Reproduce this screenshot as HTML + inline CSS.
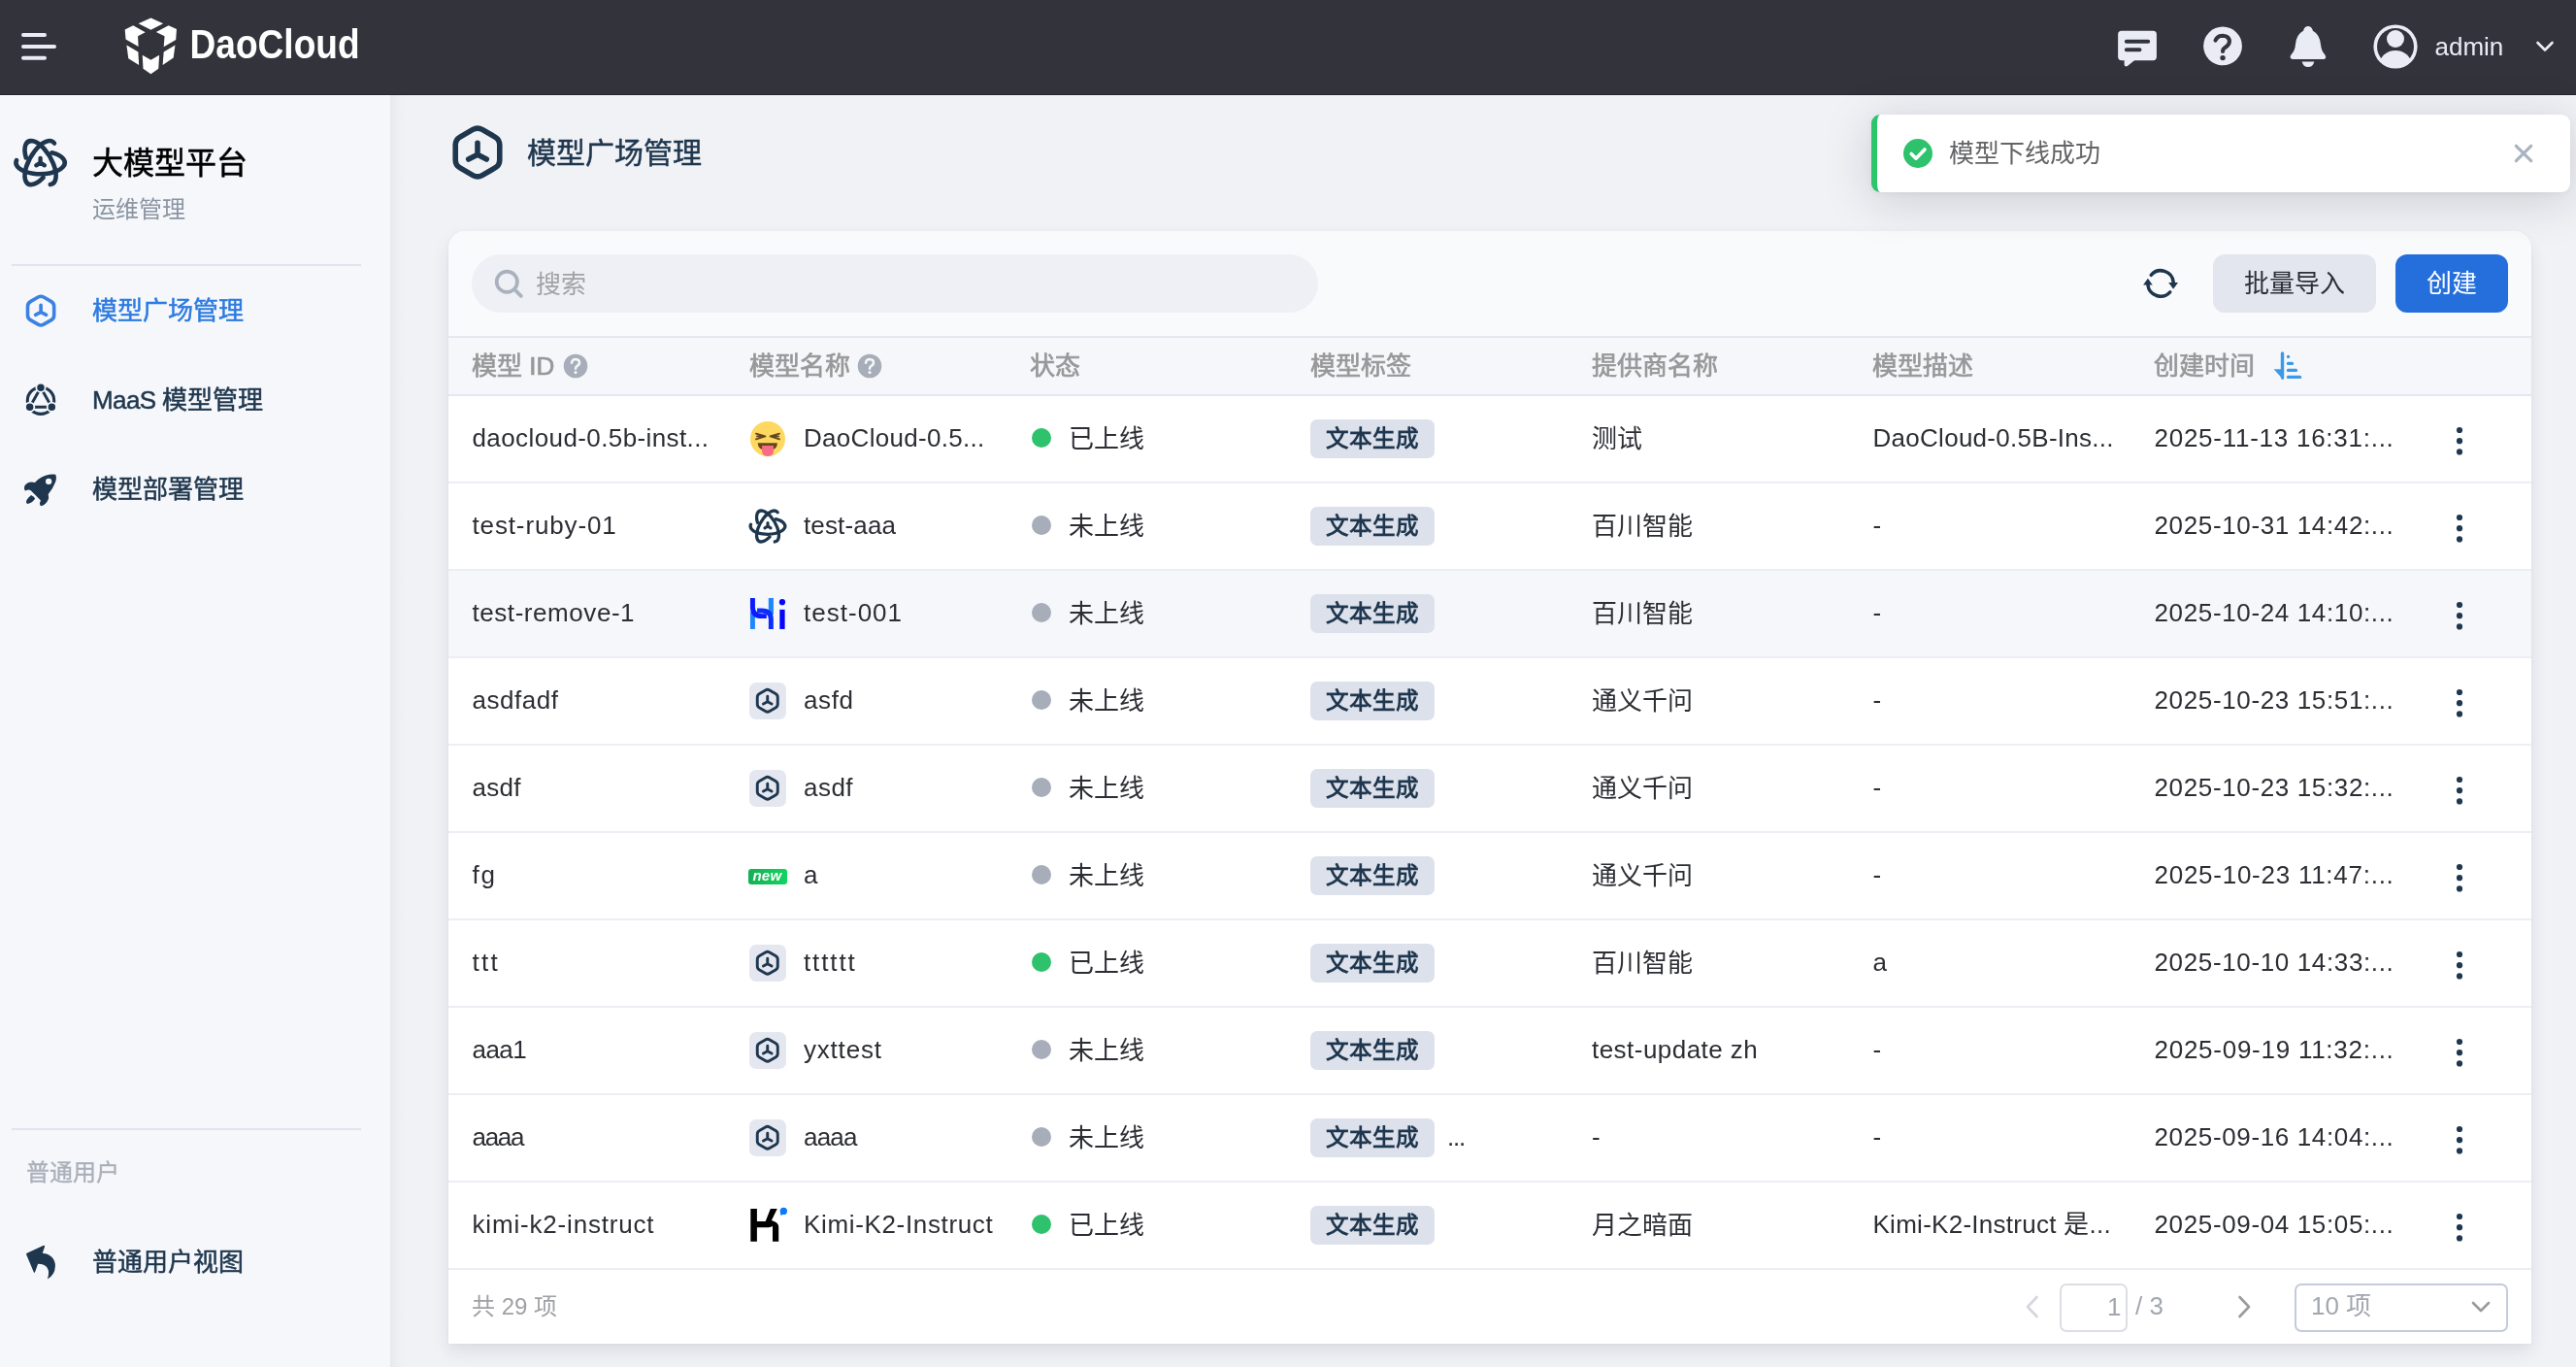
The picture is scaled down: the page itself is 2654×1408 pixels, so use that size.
<!DOCTYPE html>
<html lang="zh-CN"><head><meta charset="utf-8"><title>模型广场管理</title>
<style>
html,body{margin:0;padding:0}
body{width:2654px;height:1408px;overflow:hidden;background:#f1f2f6;font-family:"Liberation Sans",sans-serif;position:relative;color:#2c2e33}
.abs{position:absolute}
.md{-webkit-text-stroke:0.5px currentColor}
.t{position:absolute;white-space:nowrap;line-height:1}
#hdr{position:absolute;left:0;top:0;width:2654px;height:97px;background:#33343b;border-bottom:1px solid #25262b}
#side{position:absolute;left:0;top:98px;width:402px;height:1310px;background:#f6f7fb;border-top:1px solid #fdfdfe}
#sideshadow{position:absolute;left:402px;top:98px;width:16px;height:1310px;background:linear-gradient(90deg,#e8e9ed 0,#eeeff3 50%,#f1f2f6 100%)}
#panel{position:absolute;left:462px;top:238px;width:2146px;height:1146px;background:#fff;border-radius:18px 18px 0 0;box-shadow:0 8px 18px rgba(30,40,70,.10),0 1px 5px rgba(30,40,70,.04);overflow:hidden}
#tb{position:absolute;left:0;top:0;width:2146px;height:108px;background:#f9fafc}
#th{position:absolute;left:0;top:108px;width:2146px;height:58px;background:#f6f7fa;border-top:2px solid #e4e7f0;border-bottom:2px solid #e4e7f0}
.row{position:absolute;left:0;width:2146px;height:88px;border-bottom:2px solid #eceef4;background:#fff}
.hc{position:absolute;top:16px;font-size:26px;-webkit-text-stroke:0.7px currentColor;color:#989899;white-space:nowrap;line-height:1}
.c{position:absolute;top:30px;font-size:26px;color:#2c2e33;white-space:nowrap;line-height:1}
.tag{position:absolute;left:888px;top:24px;width:128px;height:40px;border-radius:7px;background:#dde1ec;color:#1f374e;font-weight:bold;font-size:23.6px;line-height:40px;text-align:center}
.dot{position:absolute;left:601px;top:32.8px;width:20px;height:20px;border-radius:50%}
.ib{position:absolute;left:310px;top:25px;width:38px;height:38px;border-radius:7px;background:#e4e7f0}
</style></head><body><div id="app" style="position:absolute;left:0;top:0;width:2654px;height:1408px;will-change:transform">

<div id="hdr">
<svg class="abs" style="left:18px;top:30px" width="44" height="36" viewBox="0 0 44 36"><g stroke="#e9ecf5" stroke-width="4" stroke-linecap="round"><path d="M6 6H28M6 17.9H38M6 29.8H28"/></g></svg>
<svg style="position:absolute;left:110px;top:10px" width="280" height="80" viewBox="0 0 2576 736"><g fill="#fff"><path d="M300 130L418 78L535 130L418 190Z"/><path d="M172 188L250 150L365 215L295 250L300 350L180 280Z"/><path d="M585 150L662 185L655 285L540 352L548 250L468 212Z"/><path d="M188 335L298 400L305 525L205 462Z"/><path d="M648 335L540 400L530 525L632 455Z"/><path d="M338 430L418 475L498 430L490 560L418 610L345 560Z"/></g></svg>
<svg class="abs" style="left:190px;top:20px" width="190" height="56" viewBox="0 0 190 56"><text x="5.6" y="39.6" font-family="Liberation Sans, sans-serif" font-weight="bold" font-size="43.4" fill="#fff" textLength="175" lengthAdjust="spacingAndGlyphs">DaoCloud</text></svg>
<svg style="position:absolute;left:2170px;top:20px" width="250" height="60" viewBox="0 0 2576 618"><g fill="#e9ecf5"><rect x="125" y="122" width="410" height="313" rx="38"/><path d="M192 420V478Q196 508 226 494L305 430Z"/><circle cx="1237" cy="283" r="205"/><path d="M2143 72Q2105 72 2092 120Q2015 160 2008 270Q2005 330 1962 375Q1940 410 1975 422H2312Q2345 410 2322 375Q2282 330 2278 270Q2270 160 2194 120Q2180 72 2143 72Z"/><path d="M2078 448H2208Q2195 505 2143 505Q2092 505 2078 448Z"/></g><g stroke="#33343b" stroke-width="42" stroke-linecap="round" fill="none"><path d="M215 235H445M215 322H355"/><path d="M1160 222Q1180 172 1237 172Q1308 176 1308 235Q1306 270 1262 298Q1237 315 1237 340"/></g><circle cx="1237" cy="408" r="28" fill="#33343b"/></svg>
<svg class="abs" style="left:2444px;top:24px" width="48" height="48" viewBox="-24 -24 48 48"><defs><clipPath id="avc"><circle r="22"/></clipPath></defs><circle r="22.6" fill="#e9ecf5"/><circle r="19.0" fill="#33343b"/><g clip-path="url(#avc)" fill="#e9ecf5"><circle cx="0" cy="-8" r="9"/><ellipse cx="0" cy="18.5" rx="16.5" ry="14.5"/></g></svg>
<div class="t" id="adm" style="left:2508.5px;top:34.6px;font-size:26px;color:#e9ecf5">admin</div>
<svg class="abs" style="left:2608px;top:36px" width="28" height="24" viewBox="0 0 28 24"><path d="M6.5 8L14 15.5L21.5 8" fill="none" stroke="#e9ecf5" stroke-width="2.6" stroke-linecap="round" stroke-linejoin="round"/></svg>
</div>
<div id="side"></div><div id="sideshadow"></div>
<svg class="abs" style="left:12.4px;top:137.9px" width="59.1" height="59.1" viewBox="-29.6 -29.6 59.1 59.1"><g fill="none" stroke="#1f374e" stroke-width="4.60" stroke-linecap="round"><path transform="rotate(0)" d="M11.79 -10.26 A25.12 11.62 0 1 1 -24.57 -2.42"/><path transform="rotate(120)" d="M11.79 -10.26 A25.12 11.62 0 1 1 -24.57 -2.42"/><path transform="rotate(240)" d="M11.79 -10.26 A25.12 11.62 0 1 1 -24.57 -2.42"/><path stroke-width="4.37" d="M0 0V-4.76 M0 0L-4.30 2.72 M0 0L4.30 2.72"/></g></svg>
<div class="t md" style="left:94.5px;top:151.5px;font-size:32px;color:#000">大模型平台</div>
<div class="t" style="left:95px;top:204px;font-size:24px;color:#8a95a2">运维管理</div>
<div class="abs" style="left:12px;top:272px;width:360px;height:2px;background:#e1e4ee"></div>
<svg style="position:absolute;left:22.9px;top:300.9px" width="38.2" height="38.2" viewBox="-19.08 -19.08 38.15 38.15"><path d="M-2.84 -14.04 Q0.00 -15.68 2.84 -14.04 L10.74 -9.48 Q13.58 -7.84 13.58 -4.56 L13.58 4.56 Q13.58 7.84 10.74 9.48 L2.84 14.04 Q0.00 15.68 -2.84 14.04 L-10.74 9.48 Q-13.58 7.84 -13.58 4.56 L-13.58 -4.56 Q-13.58 -7.84 -10.74 -9.48 Z" fill="none" stroke="#3a82e4" stroke-width="3.60" stroke-linejoin="round"/><path d="M0.00 1.37 L0.00 -5.84 M0.00 1.37 L-5.54 4.17 M0.00 1.37 L5.54 4.17" fill="none" stroke="#3a82e4" stroke-width="3.60" stroke-linecap="round"/></svg>
<div class="t md" style="left:95px;top:307px;font-size:26px;color:#2d7be0">模型广场管理</div>
<svg style="position:absolute;left:15px;top:375px" width="60" height="155" viewBox="0 0 529 1367"><g fill="none" stroke="#1f374e" stroke-width="27"><circle cx="238" cy="332" r="121"/><path d="M238 213L138 390H338Z" stroke-width="26"/></g><g fill="#1f374e" stroke="#f6f7fb" stroke-width="16"><circle cx="238" cy="213" r="41"/><circle cx="138" cy="390" r="41"/><circle cx="338" cy="390" r="41"/></g><path fill="#1f374e" d="M372 1003Q290 995 218 1045Q198 1060 185 1075Q120 1060 92 1105Q82 1140 98 1152Q130 1135 150 1150L238 1240Q220 1270 238 1290Q285 1280 308 1225Q312 1200 305 1185Q350 1130 372 1070Q385 1030 372 1003Z"/><circle cx="310" cy="1066" r="28" fill="#f6f7fb"/><path fill="#1f374e" d="M150 1190Q175 1200 187 1222Q160 1262 118 1270Q100 1262 108 1240Q125 1210 150 1190Z"/></svg>
<div class="t md" style="left:95px;top:399px;font-size:26px;color:#1f374e"><span style="letter-spacing:-0.6px">MaaS </span>模型管理</div>
<div class="t md" style="left:95px;top:491px;font-size:26px;color:#1f374e">模型部署管理</div>
<div class="abs" style="left:12px;top:1162px;width:360px;height:2px;background:#e1e4ee"></div>
<div class="t" style="left:27px;top:1196px;font-size:24px;color:#aab0b9;-webkit-text-stroke:0.35px currentColor">普通用户</div>
<svg style="position:absolute;left:15px;top:1270px" width="60" height="60" viewBox="0 0 1367 1367"><path fill="#1f374e" d="M700 295Q715 300 705 330L655 470Q800 480 880 570Q960 660 955 780Q945 990 770 1080Q830 930 770 820Q700 725 550 725L480 915Q465 940 450 915L275 500Q270 480 290 470L670 295Q690 288 700 295Z"/></svg>
<div class="t md" style="left:95px;top:1286.5px;font-size:26px;color:#1f374e">普通用户视图</div>
<svg style="position:absolute;left:460.0px;top:125.4px" width="64.0" height="64.0" viewBox="-32.00 -32.00 64.00 64.00"><path d="M-4.76 -23.55 Q0.00 -26.30 4.76 -23.55 L18.01 -15.90 Q22.78 -13.15 22.78 -7.65 L22.78 7.65 Q22.78 13.15 18.01 15.90 L4.76 23.55 Q0.00 26.30 -4.76 23.55 L-18.01 15.90 Q-22.78 13.15 -22.78 7.65 L-22.78 -7.65 Q-22.78 -13.15 -18.01 -15.90 Z" fill="none" stroke="#1f374e" stroke-width="5.60" stroke-linejoin="round"/><path d="M0.00 2.30 L0.00 -9.80 M0.00 2.30 L-9.30 7.00 M0.00 2.30 L9.30 7.00" fill="none" stroke="#1f374e" stroke-width="5.60" stroke-linecap="round"/></svg>
<div class="t md" style="left:542.5px;top:143px;font-size:30px;color:#1f374e">模型广场管理</div>
<div id="panel">
<div id="tb">
<div class="abs" style="left:24px;top:24px;width:872px;height:60px;border-radius:30px;background:#eff0f5"></div>
<svg class="abs" style="left:43.6px;top:36.2px" width="36" height="36" viewBox="0 0 36 36"><circle cx="16.3" cy="16.3" r="10.6" fill="none" stroke="#a8b1bd" stroke-width="3.7"/><path d="M24.4 24.4L30.8 30.8" stroke="#a9b4c0" stroke-width="3.8" stroke-linecap="round"/></svg>
<div class="t" style="left:90px;top:42px;font-size:26px;color:#a2a3a6">搜索</div>
<svg style="position:absolute;left:1734px;top:24px" width="60" height="60" viewBox="0 0 1367 1367"><g fill="none" stroke="#1f374e" stroke-width="80" stroke-linecap="round"><path d="M460 485A300 300 0 0 1 985 655"/><path d="M905 885A300 300 0 0 1 385 715"/></g><g fill="#1f374e"><path d="M870 660H1095L982 815Z"/><path d="M275 715H495L385 565Z"/></g></svg>
<div class="abs" style="left:1818px;top:24px;width:168px;height:60px;border-radius:12px;background:#e3e6ee;color:#2b2f37;font-size:26px;line-height:60px;text-align:center">批量导入</div>
<div class="abs" style="left:2006px;top:24px;width:116px;height:60px;border-radius:12px;background:#256fdc;color:#fff;font-size:26px;line-height:60px;text-align:center">创建</div>
</div>
<div id="th">
<div class="hc" style="left:24px">模型 ID</div><svg class="abs" style="left:118px;top:15.7px" width="26" height="26" viewBox="-13 -13 26 26"><circle r="12.3" fill="#a7adb9"/><path d="M-4 -3.2Q-3.6 -7 0 -7Q4 -6.8 4 -3.4Q4 -1.2 1.4 0.2Q0 1 0 2.8" fill="none" stroke="#f5f6f9" stroke-width="2.5" stroke-linecap="round"/><circle cx="0" cy="6.6" r="1.6" fill="#f5f6f9"/></svg>
<div class="hc" style="left:310px">模型名称</div><svg class="abs" style="left:421px;top:15.7px" width="26" height="26" viewBox="-13 -13 26 26"><circle r="12.3" fill="#a7adb9"/><path d="M-4 -3.2Q-3.6 -7 0 -7Q4 -6.8 4 -3.4Q4 -1.2 1.4 0.2Q0 1 0 2.8" fill="none" stroke="#f5f6f9" stroke-width="2.5" stroke-linecap="round"/><circle cx="0" cy="6.6" r="1.6" fill="#f5f6f9"/></svg>
<div class="hc" style="left:598.8px">状态</div>
<div class="hc" style="left:888px">模型标签</div>
<div class="hc" style="left:1178px">提供商名称</div>
<div class="hc" style="left:1467px">模型描述</div>
<div class="hc" style="left:1757px">创建时间</div>
<svg class="abs" style="left:1878px;top:13px" width="34" height="34" viewBox="0 0 34 34"><g fill="none" stroke="#3b9ae8" stroke-width="3.4" stroke-linecap="round"><path d="M11.5 3V28"/><path d="M17.5 6.4H17.6M17.5 13.4H21.5M17.5 20.4H25.5M17.5 27.4H29.6"/></g><path d="M2.6 19.2H12.6V30.2Z" fill="#3b9ae8"/></svg>
</div>
<div class="row" style="top:170px">
<div class="c" id="i0" style="left:24.5px;letter-spacing:0.400px">daocloud-0.5b-inst...</div>
<svg class="abs" style="left:310px;top:25px" width="38" height="38" viewBox="-19 -19 38 38"><circle r="18" fill="#ffd862"/><path d="M-10.4 4.2H10Q9.6 12.3 0 12.3Q-9.8 12.3 -10.4 4.2Z" fill="#65471b"/><path d="M-5.9 7H5.9V12.5Q5.9 17.9 0 17.9Q-5.9 17.9 -5.9 12.5Z" fill="#f76b84"/><path d="M-12 -5.4L-2.6 -2.6L-12 0.4M12 -5.4L2.6 -2.6L12 0.4M-11 -2.6H-4M11 -2.6H4" fill="none" stroke="#65471b" stroke-width="1.9" stroke-linecap="round" stroke-linejoin="round"/></svg>
<div class="c" id="n0" style="left:366px;letter-spacing:0.293px">DaoCloud-0.5...</div>
<div class="dot" style="background:#2dc26b"></div>
<div class="c" id="s0" style="left:639px;top:30.5px">已上线</div>
<div class="tag">文本生成</div>
<div class="c" id="p0" style="left:1178px;top:30.5px">测试</div>
<div class="c" id="d0" style="left:1467.5px;letter-spacing:0.279px">DaoCloud-0.5B-Ins...</div>
<div class="c" id="t0" style="left:1757.5px;letter-spacing:0.742px">2025-11-13 16:31:...</div>
<svg class="abs" style="left:2064px;top:28px" width="16" height="36" viewBox="0 0 16 36"><g fill="#1f374e"><circle cx="8" cy="7" r="3.1"/><circle cx="8" cy="18.2" r="3.1"/><circle cx="8" cy="29.4" r="3.1"/></g></svg>
</div>
<div class="row" style="top:260px">
<div class="c" id="i1" style="left:24.5px;letter-spacing:0.864px">test-ruby-01</div>
<svg class="abs" style="left:308.0px;top:23.0px" width="42.0" height="42.0" viewBox="-21.0 -21.0 42.0 42.0"><g fill="none" stroke="#1f374e" stroke-width="3.30" stroke-linecap="round"><path transform="rotate(0)" d="M8.38 -7.29 A17.85 8.26 0 1 1 -17.46 -1.72"/><path transform="rotate(120)" d="M8.38 -7.29 A17.85 8.26 0 1 1 -17.46 -1.72"/><path transform="rotate(240)" d="M8.38 -7.29 A17.85 8.26 0 1 1 -17.46 -1.72"/><path stroke-width="3.13" d="M0 0V-3.38 M0 0L-3.06 1.93 M0 0L3.06 1.93"/></g></svg>
<div class="c" id="n1" style="left:366px;letter-spacing:0.143px">test-aaa</div>
<div class="dot" style="background:#a7adb9"></div>
<div class="c" id="s1" style="left:639px;top:30.5px">未上线</div>
<div class="tag">文本生成</div>
<div class="c" id="p1" style="left:1178px;top:30.5px">百川智能</div>
<div class="c" id="d1" style="left:1467.5px">-</div>
<div class="c" id="t1" style="left:1757.5px;letter-spacing:0.637px">2025-10-31 14:42:...</div>
<svg class="abs" style="left:2064px;top:28px" width="16" height="36" viewBox="0 0 16 36"><g fill="#1f374e"><circle cx="8" cy="7" r="3.1"/><circle cx="8" cy="18.2" r="3.1"/><circle cx="8" cy="29.4" r="3.1"/></g></svg>
</div>
<div class="row" style="top:350px;background:#f6f7fa">
<div class="c" id="i2" style="left:24.5px;letter-spacing:0.558px">test-remove-1</div>
<svg style="position:absolute;left:304px;top:19px" width="50" height="50" viewBox="0 0 1367 1367"><rect x="190" y="640" width="135" height="480" fill="#1e86ff"/><rect x="705" y="245" width="140" height="460" fill="#1e86ff"/><g fill="none" stroke-width="136"><path d="M385 602H520Q775 602 775 850V1120" stroke="#0b2dff"/><path d="M258 245V505Q258 755 520 755H650" stroke="#0a1cff"/></g><rect x="1020" y="570" width="145" height="550" fill="#0505ff"/><circle cx="1092" cy="360" r="85" fill="#0505ff"/></svg>
<div class="c" id="n2" style="left:366px;letter-spacing:1.014px">test-001</div>
<div class="dot" style="background:#a7adb9"></div>
<div class="c" id="s2" style="left:639px;top:30.5px">未上线</div>
<div class="tag">文本生成</div>
<div class="c" id="p2" style="left:1178px;top:30.5px">百川智能</div>
<div class="c" id="d2" style="left:1467.5px">-</div>
<div class="c" id="t2" style="left:1757.5px;letter-spacing:0.637px">2025-10-24 14:10:...</div>
<svg class="abs" style="left:2064px;top:28px" width="16" height="36" viewBox="0 0 16 36"><g fill="#1f374e"><circle cx="8" cy="7" r="3.1"/><circle cx="8" cy="18.2" r="3.1"/><circle cx="8" cy="29.4" r="3.1"/></g></svg>
</div>
<div class="row" style="top:440px">
<div class="c" id="i3" style="left:24.5px;letter-spacing:0.533px">asdfadf</div>
<div class="ib"></div><svg style="position:absolute;left:314.2px;top:29.2px" width="29.5" height="29.5" viewBox="-14.77 -14.77 29.54 29.54"><path d="M-2.20 -10.87 Q0.00 -12.14 2.20 -10.87 L8.31 -7.34 Q10.51 -6.07 10.51 -3.53 L10.51 3.53 Q10.51 6.07 8.31 7.34 L2.20 10.87 Q0.00 12.14 -2.20 10.87 L-8.31 7.34 Q-10.51 6.07 -10.51 3.53 L-10.51 -3.53 Q-10.51 -6.07 -8.31 -7.34 Z" fill="none" stroke="#1f374e" stroke-width="2.90" stroke-linejoin="round"/><path d="M0.00 1.06 L0.00 -4.52 M0.00 1.06 L-4.29 3.23 M0.00 1.06 L4.29 3.23" fill="none" stroke="#1f374e" stroke-width="2.90" stroke-linecap="round"/></svg>
<div class="c" id="n3" style="left:366px;letter-spacing:0.633px">asfd</div>
<div class="dot" style="background:#a7adb9"></div>
<div class="c" id="s3" style="left:639px;top:30.5px">未上线</div>
<div class="tag">文本生成</div>
<div class="c" id="p3" style="left:1178px;top:30.5px">通义千问</div>
<div class="c" id="d3" style="left:1467.5px">-</div>
<div class="c" id="t3" style="left:1757.5px;letter-spacing:0.637px">2025-10-23 15:51:...</div>
<svg class="abs" style="left:2064px;top:28px" width="16" height="36" viewBox="0 0 16 36"><g fill="#1f374e"><circle cx="8" cy="7" r="3.1"/><circle cx="8" cy="18.2" r="3.1"/><circle cx="8" cy="29.4" r="3.1"/></g></svg>
</div>
<div class="row" style="top:530px">
<div class="c" id="i4" style="left:24.5px;letter-spacing:0.267px">asdf</div>
<div class="ib"></div><svg style="position:absolute;left:314.2px;top:29.2px" width="29.5" height="29.5" viewBox="-14.77 -14.77 29.54 29.54"><path d="M-2.20 -10.87 Q0.00 -12.14 2.20 -10.87 L8.31 -7.34 Q10.51 -6.07 10.51 -3.53 L10.51 3.53 Q10.51 6.07 8.31 7.34 L2.20 10.87 Q0.00 12.14 -2.20 10.87 L-8.31 7.34 Q-10.51 6.07 -10.51 3.53 L-10.51 -3.53 Q-10.51 -6.07 -8.31 -7.34 Z" fill="none" stroke="#1f374e" stroke-width="2.90" stroke-linejoin="round"/><path d="M0.00 1.06 L0.00 -4.52 M0.00 1.06 L-4.29 3.23 M0.00 1.06 L4.29 3.23" fill="none" stroke="#1f374e" stroke-width="2.90" stroke-linecap="round"/></svg>
<div class="c" id="n4" style="left:366px;letter-spacing:0.467px">asdf</div>
<div class="dot" style="background:#a7adb9"></div>
<div class="c" id="s4" style="left:639px;top:30.5px">未上线</div>
<div class="tag">文本生成</div>
<div class="c" id="p4" style="left:1178px;top:30.5px">通义千问</div>
<div class="c" id="d4" style="left:1467.5px">-</div>
<div class="c" id="t4" style="left:1757.5px;letter-spacing:0.637px">2025-10-23 15:32:...</div>
<svg class="abs" style="left:2064px;top:28px" width="16" height="36" viewBox="0 0 16 36"><g fill="#1f374e"><circle cx="8" cy="7" r="3.1"/><circle cx="8" cy="18.2" r="3.1"/><circle cx="8" cy="29.4" r="3.1"/></g></svg>
</div>
<div class="row" style="top:620px">
<div class="c" id="i5" style="left:24.5px;letter-spacing:1.900px">fg</div>
<div class="abs" style="left:309px;top:37px;width:40px;height:15.5px;border-radius:3px;background:linear-gradient(90deg,#14b055,#12d460)"></div><div class="t" style="left:313.4px;top:36.3px;font-size:15px;font-weight:bold;font-style:italic;color:#fff;letter-spacing:0.3px">new</div>
<div class="c" id="n5" style="left:366px">a</div>
<div class="dot" style="background:#a7adb9"></div>
<div class="c" id="s5" style="left:639px;top:30.5px">未上线</div>
<div class="tag">文本生成</div>
<div class="c" id="p5" style="left:1178px;top:30.5px">通义千问</div>
<div class="c" id="d5" style="left:1467.5px">-</div>
<div class="c" id="t5" style="left:1757.5px;letter-spacing:0.742px">2025-10-23 11:47:...</div>
<svg class="abs" style="left:2064px;top:28px" width="16" height="36" viewBox="0 0 16 36"><g fill="#1f374e"><circle cx="8" cy="7" r="3.1"/><circle cx="8" cy="18.2" r="3.1"/><circle cx="8" cy="29.4" r="3.1"/></g></svg>
</div>
<div class="row" style="top:710px">
<div class="c" id="i6" style="left:24.5px;letter-spacing:2.250px">ttt</div>
<div class="ib"></div><svg style="position:absolute;left:314.2px;top:29.2px" width="29.5" height="29.5" viewBox="-14.77 -14.77 29.54 29.54"><path d="M-2.20 -10.87 Q0.00 -12.14 2.20 -10.87 L8.31 -7.34 Q10.51 -6.07 10.51 -3.53 L10.51 3.53 Q10.51 6.07 8.31 7.34 L2.20 10.87 Q0.00 12.14 -2.20 10.87 L-8.31 7.34 Q-10.51 6.07 -10.51 3.53 L-10.51 -3.53 Q-10.51 -6.07 -8.31 -7.34 Z" fill="none" stroke="#1f374e" stroke-width="2.90" stroke-linejoin="round"/><path d="M0.00 1.06 L0.00 -4.52 M0.00 1.06 L-4.29 3.23 M0.00 1.06 L4.29 3.23" fill="none" stroke="#1f374e" stroke-width="2.90" stroke-linecap="round"/></svg>
<div class="c" id="n6" style="left:366px;letter-spacing:1.900px">tttttt</div>
<div class="dot" style="background:#2dc26b"></div>
<div class="c" id="s6" style="left:639px;top:30.5px">已上线</div>
<div class="tag">文本生成</div>
<div class="c" id="p6" style="left:1178px;top:30.5px">百川智能</div>
<div class="c" id="d6" style="left:1467.5px">a</div>
<div class="c" id="t6" style="left:1757.5px;letter-spacing:0.637px">2025-10-10 14:33:...</div>
<svg class="abs" style="left:2064px;top:28px" width="16" height="36" viewBox="0 0 16 36"><g fill="#1f374e"><circle cx="8" cy="7" r="3.1"/><circle cx="8" cy="18.2" r="3.1"/><circle cx="8" cy="29.4" r="3.1"/></g></svg>
</div>
<div class="row" style="top:800px">
<div class="c" id="i7" style="left:24.5px;letter-spacing:-0.567px">aaa1</div>
<div class="ib"></div><svg style="position:absolute;left:314.2px;top:29.2px" width="29.5" height="29.5" viewBox="-14.77 -14.77 29.54 29.54"><path d="M-2.20 -10.87 Q0.00 -12.14 2.20 -10.87 L8.31 -7.34 Q10.51 -6.07 10.51 -3.53 L10.51 3.53 Q10.51 6.07 8.31 7.34 L2.20 10.87 Q0.00 12.14 -2.20 10.87 L-8.31 7.34 Q-10.51 6.07 -10.51 3.53 L-10.51 -3.53 Q-10.51 -6.07 -8.31 -7.34 Z" fill="none" stroke="#1f374e" stroke-width="2.90" stroke-linejoin="round"/><path d="M0.00 1.06 L0.00 -4.52 M0.00 1.06 L-4.29 3.23 M0.00 1.06 L4.29 3.23" fill="none" stroke="#1f374e" stroke-width="2.90" stroke-linecap="round"/></svg>
<div class="c" id="n7" style="left:366px;letter-spacing:0.800px">yxttest</div>
<div class="dot" style="background:#a7adb9"></div>
<div class="c" id="s7" style="left:639px;top:30.5px">未上线</div>
<div class="tag">文本生成</div>
<div class="c" id="p7" style="left:1178px;letter-spacing:0.462px">test-update zh</div>
<div class="c" id="d7" style="left:1467.5px">-</div>
<div class="c" id="t7" style="left:1757.5px;letter-spacing:0.742px">2025-09-19 11:32:...</div>
<svg class="abs" style="left:2064px;top:28px" width="16" height="36" viewBox="0 0 16 36"><g fill="#1f374e"><circle cx="8" cy="7" r="3.1"/><circle cx="8" cy="18.2" r="3.1"/><circle cx="8" cy="29.4" r="3.1"/></g></svg>
</div>
<div class="row" style="top:890px">
<div class="c" id="i8" style="left:24.5px;letter-spacing:-1.300px">aaaa</div>
<div class="ib"></div><svg style="position:absolute;left:314.2px;top:29.2px" width="29.5" height="29.5" viewBox="-14.77 -14.77 29.54 29.54"><path d="M-2.20 -10.87 Q0.00 -12.14 2.20 -10.87 L8.31 -7.34 Q10.51 -6.07 10.51 -3.53 L10.51 3.53 Q10.51 6.07 8.31 7.34 L2.20 10.87 Q0.00 12.14 -2.20 10.87 L-8.31 7.34 Q-10.51 6.07 -10.51 3.53 L-10.51 -3.53 Q-10.51 -6.07 -8.31 -7.34 Z" fill="none" stroke="#1f374e" stroke-width="2.90" stroke-linejoin="round"/><path d="M0.00 1.06 L0.00 -4.52 M0.00 1.06 L-4.29 3.23 M0.00 1.06 L4.29 3.23" fill="none" stroke="#1f374e" stroke-width="2.90" stroke-linecap="round"/></svg>
<div class="c" id="n8" style="left:366px;letter-spacing:-0.833px">aaaa</div>
<div class="dot" style="background:#a7adb9"></div>
<div class="c" id="s8" style="left:639px;top:30.5px">未上线</div>
<div class="tag">文本生成</div>
<div class="c" style="left:1029px;letter-spacing:-1.2px">...</div>
<div class="c" id="p8" style="left:1178px">-</div>
<div class="c" id="d8" style="left:1467.5px">-</div>
<div class="c" id="t8" style="left:1757.5px;letter-spacing:0.637px">2025-09-16 14:04:...</div>
<svg class="abs" style="left:2064px;top:28px" width="16" height="36" viewBox="0 0 16 36"><g fill="#1f374e"><circle cx="8" cy="7" r="3.1"/><circle cx="8" cy="18.2" r="3.1"/><circle cx="8" cy="29.4" r="3.1"/></g></svg>
</div>
<div class="row" style="top:980px">
<div class="c" id="i9" style="left:24.5px;letter-spacing:0.820px">kimi-k2-instruct</div>
<svg style="position:absolute;left:304px;top:19px" width="50" height="50" viewBox="0 0 1367 1367"><path fill="#000" d="M200 220H380V575H620L760 220H950L790 545Q850 560 890 585Q990 630 990 740V1140H820V705Q790 745 700 745H380V1140H200Z"/><circle cx="1130" cy="285" r="100" fill="#0a78ff"/><path d="M1040 330L1045 405L1120 380Z" fill="#0a78ff"/></svg>
<div class="c" id="n9" style="left:366px;letter-spacing:0.653px">Kimi-K2-Instruct</div>
<div class="dot" style="background:#2dc26b"></div>
<div class="c" id="s9" style="left:639px;top:30.5px">已上线</div>
<div class="tag">文本生成</div>
<div class="c" id="p9" style="left:1178px;top:30.5px">月之暗面</div>
<div class="c" id="d9" style="left:1467.5px;letter-spacing:0.270px">Kimi-K2-Instruct 是...</div>
<div class="c" id="t9" style="left:1757.5px;letter-spacing:0.637px">2025-09-04 15:05:...</div>
<svg class="abs" style="left:2064px;top:28px" width="16" height="36" viewBox="0 0 16 36"><g fill="#1f374e"><circle cx="8" cy="7" r="3.1"/><circle cx="8" cy="18.2" r="3.1"/><circle cx="8" cy="29.4" r="3.1"/></g></svg>
</div>
<div class="t" id="f0" style="left:24px;top:1096px;font-size:24px;color:#a0a1a4">共 29 项</div>
<svg class="abs" style="left:1620px;top:1093px" width="24" height="30" viewBox="0 0 24 30"><path d="M16.5 5L7 15L16.5 25" fill="none" stroke="#d3d6dc" stroke-width="2.6" stroke-linecap="round" stroke-linejoin="round"/></svg>
<div class="abs" style="left:1660px;top:1084px;width:66px;height:46px;border:2px solid #dcdee3;border-radius:7px;background:#fff"></div>
<div class="t" id="f1" style="left:1709px;top:1095px;font-size:26px;color:#a3a7ae">1</div>
<div class="t" id="f2" style="left:1738px;top:1094px;font-size:26px;color:#a3a7ae">/ 3</div>
<svg class="abs" style="left:1838px;top:1093px" width="24" height="30" viewBox="0 0 24 30"><path d="M7.5 5L17 15L7.5 25" fill="none" stroke="#9a9b9d" stroke-width="2.6" stroke-linecap="round" stroke-linejoin="round"/></svg>
<div class="abs" style="left:1902px;top:1084px;width:216px;height:46px;border:2px solid #c5cbdb;border-radius:7px;background:#fff"></div>
<div class="t" id="f3" style="left:1919px;top:1094px;font-size:26px;color:#a3a7ae">10 项</div>
<svg class="abs" style="left:2080px;top:1096px" width="28" height="24" viewBox="0 0 28 24"><path d="M6 8L14 16L22 8" fill="none" stroke="#9a9b9d" stroke-width="2.6" stroke-linecap="round" stroke-linejoin="round"/></svg>
</div>
<div class="abs" style="left:1928px;top:118px;width:714px;height:80px;border-radius:9px;background:#fff;border-left:6px solid #2dc56b;box-shadow:0 8px 50px rgba(20,25,40,.17),0 2px 10px rgba(20,25,40,.05)">
<svg class="abs" style="left:26px;top:24px" width="32" height="32" viewBox="-16 -16 32 32"><circle r="15" fill="#2dc26b"/><path d="M-6.8 0.4L-2 5.2L7 -4" fill="none" stroke="#fff" stroke-width="3.6" stroke-linecap="round" stroke-linejoin="round"/></svg>
<div class="t" style="left:74px;top:27px;font-size:26px;color:#636466">模型下线成功</div>
<svg class="abs" style="left:654px;top:28px" width="24" height="24" viewBox="0 0 24 24"><path d="M4.3 4.3L19.7 19.7M19.7 4.3L4.3 19.7" stroke="#a9b4c0" stroke-width="3.2" stroke-linecap="round"/></svg>
</div>
</div></body></html>
